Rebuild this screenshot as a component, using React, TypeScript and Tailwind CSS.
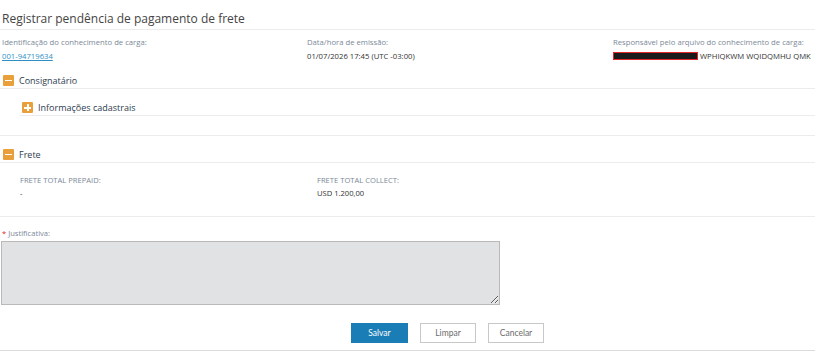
import React from "react";

const Toggle = ({ open }: { open: boolean }) => (
  <span className="inline-flex items-center justify-center w-[11px] h-[11px] bg-[#e99f3a] rounded-[1px] shrink-0">
    {open ? (
      <span className="block w-[7px] h-[1.5px] bg-white" />
    ) : (
      <span className="relative block w-[7px] h-[7px]">
        <span className="absolute left-0 top-[3px] w-[7px] h-[1.5px] bg-white" />
        <span className="absolute top-0 left-[3px] w-[1.5px] h-[7px] bg-white" />
      </span>
    )}
  </span>
);

const App = () => {
  return (
    <div className="w-[815px] h-[353px] bg-white overflow-hidden font-['Open_Sans',sans-serif] text-[#333]">
      {/* Title */}
      <div className="h-[30px] flex items-end px-[2px] pb-[3px] border-b border-[#ececec]">
        <h1 className="text-[12px] leading-[14px] text-[#444]">Registrar pendência de pagamento de frete</h1>
      </div>

      {/* Header info */}
      <div className="grid grid-cols-[305px_306px_1fr] px-[2px] pt-[5px] text-[7.7px] leading-[14px]">
        <div>
          <div className="text-[#7b8998]">Identificação do conhecimento de carga:</div>
          <a className="text-[#2f8fc4] underline">001-94719634</a>
        </div>
        <div>
          <div className="text-[#7b8998]">Data/hora de emissão:</div>
          <div className="text-[#333]">01/07/2026 17:45 (UTC -03:00)</div>
        </div>
        <div>
          <div className="text-[#7b8998] whitespace-nowrap">Responsável pelo arquivo do conhecimento de carga:</div>
          <div className="flex items-center whitespace-nowrap text-[#333]">
            <span className="inline-block w-[85px] h-[8px] bg-[#1a1a1a] border border-[#e3262b] mr-[2px]" />
            WPHIQKWM WQIDQMHU QMK
          </div>
        </div>
      </div>

      {/* Consignatário */}
      <div className="h-[26px] flex items-end gap-[5px] px-[3px] pb-[2px] border-b border-[#ececec]">
        <Toggle open />
        <span className="text-[9px] leading-[11px] text-[#2e3d4f]">Consignatário</span>
      </div>
      <div className="pl-[20px] pb-[19px] border-b border-[#ececec]">
        <div className="h-[27px] flex items-end gap-[5px] pl-[2px] pb-[2px] border-b border-[#ececec]">
          <Toggle open={false} />
          <span className="text-[9px] leading-[11px] text-[#2e3d4f]">Informações cadastrais</span>
        </div>
      </div>

      {/* Frete */}
      <div className="h-[27px] flex items-end gap-[5px] px-[3px] pb-[2px] border-b border-[#ececec]">
        <Toggle open />
        <span className="text-[9px] leading-[11px] text-[#2e3d4f]">Frete</span>
      </div>
      <div className="grid grid-cols-[297px_1fr] pl-[20px] pt-[11px] pb-[16px] border-b border-[#ececec] text-[7.6px] leading-[13px]">
        <div>
          <div className="text-[#7b8998]">FRETE TOTAL PREPAID:</div>
          <div>-</div>
        </div>
        <div>
          <div className="text-[#7b8998]">FRETE TOTAL COLLECT:</div>
          <div>USD 1.200,00</div>
        </div>
      </div>

      {/* Justificativa */}
      <div className="px-[1px] pt-[10px]">
        <div className="pl-[1px] text-[7.6px] leading-[12px] text-[#7b8998]">
          <span className="text-[#e0242a]">*</span> Justificativa:
        </div>
        <textarea className="block mt-[2px] w-[499px] h-[64px] bg-[#e1e2e4] border border-[#b9b9b9] outline-none" />
      </div>

      {/* Buttons */}
      <div className="flex justify-center gap-[12px] pl-[80px] pt-[18px] pb-[7px] border-b border-[#dcdcdc] font-['Lato',sans-serif] text-[8.5px]">
        <button className="w-[57px] h-[20px] bg-[#1b7db5] text-white border border-[#1b7db5]">Salvar</button>
        <button className="w-[56px] h-[20px] bg-white text-[#6b6b6b] border border-[#c8c8c8]">Limpar</button>
        <button className="w-[56px] h-[20px] bg-white text-[#6b6b6b] border border-[#c8c8c8]">Cancelar</button>
      </div>
    </div>
  );
};

export default App;
